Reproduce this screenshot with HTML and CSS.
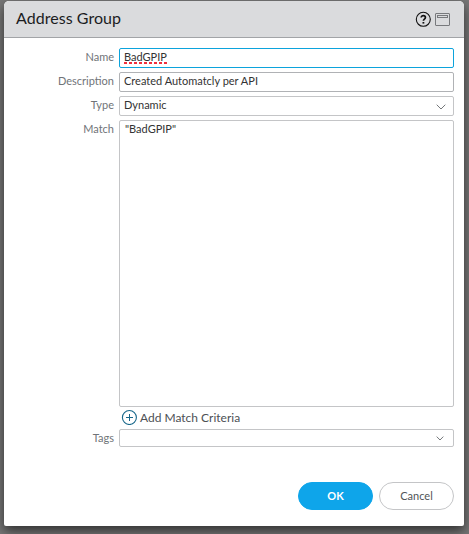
FILE: index.html
```
<!DOCTYPE html>
<html lang="en">
<head>
<meta charset="utf-8">
<title>Address Group</title>
<link rel="stylesheet" href="styles.css">
</head>
<body>
<section class="dialog">
  <header class="titlebar">
    <h1>Address Group</h1>
    <svg class="help" width="16" height="16" viewBox="0 0 16 16" fill="none" stroke="#111">
      <circle cx="8.3" cy="8.3" r="7" stroke-width="1.1"/>
      <path d="M6.2 6.5C6.2 3.9 10.4 4 10.4 6.5C10.4 8.1 8.4 8.1 8.4 9.8" stroke-width="1.7"/>
      <path d="M8.4 11V12.6" stroke-width="1.8"/>
    </svg>
    <svg class="window" width="15" height="13" viewBox="0 0 15 13" fill="none" stroke="#77797c">
      <rect x=".5" y=".5" width="14" height="12" rx=".5"/>
      <rect x="2.5" y="2.5" width="10" height="2"/>
    </svg>
  </header>
  <div class="form">
    <span class="label">Name</span>
    <div class="field focused"><span class="misspelled">BadGPIP</span></div>
    <span class="label">Description</span>
    <div class="field dark">Created Automatcly per API</div>
    <span class="label">Type</span>
    <div class="field select">Dynamic
      <svg width="10" height="6" viewBox="0 0 10 6" fill="none" stroke="#74777a"><path d="M.7.7L5 5L9.3.7"/></svg>
    </div>
    <span class="label">Match</span>
    <div class="field area">"BadGPIP"</div>
    <div class="add">
      <svg width="16" height="16" viewBox="0 0 16 16" fill="none" stroke="#17678a"><circle cx="8.4" cy="8.5" r="7" stroke-width="1.1"/><path d="M5 8.5H12M8.5 5V12"/></svg>
      <span>Add Match Criteria</span>
    </div>
    <span class="label">Tags</span>
    <div class="field tags">
      <svg width="8" height="5" viewBox="0 0 8 5" fill="none" stroke="#74777a"><path d="M.7.6L4 4L7.3.6"/></svg>
    </div>
  </div>
  <footer class="actions">
    <button class="ok">OK</button>
    <button class="cancel">Cancel</button>
  </footer>
</section>
</body>
</html>
```
FILE: styles.css
```
* { box-sizing: border-box; }
html, body { height: 100%; }
body {
  margin: 0;
  padding: 1px 5px 8px 4px;
  overflow: hidden;
  background: #777;
  font: 11px/16px Lato, "Liberation Sans", sans-serif;
  color: #333;
}
.dialog {
  height: 525px;
  display: flex;
  flex-direction: column;
  background: #fff;
  border-radius: 5px 5px 2px 2px;
  box-shadow: 0 5px 12px rgba(0, 0, 0, .6);
}
.titlebar {
  height: 37px;
  display: flex;
  align-items: center;
  padding: 0 14px 0 12px;
  background: #dadbdd;
  border-bottom: 1px solid #a2a4a7;
  border-radius: 5px 5px 0 0;
}
h1 {
  margin: 0 auto 0 0;
  padding-bottom: 2px;
  font-size: 16px;
  font-weight: 400;
  line-height: 20px;
  letter-spacing: .04px;
  color: #1c1d1f;
}
.help { margin-right: 4px; }
.form {
  display: grid;
  grid-template-columns: 110px 335px;
  column-gap: 5px;
  row-gap: 4px;
  grid-template-rows: 20px 20px 20px 287px 14px 18px;
  padding-top: 10px;
}
.label {
  padding-top: 1px;
  text-align: right;
  color: #707478;
}
.field {
  height: 100%;
  padding: 0 4px;
  border: 1px solid #c4c5c7;
  border-radius: 2px;
}
.dark { border-color: #b0b2b5; }
.focused { border-color: #0ca3dc; }
.misspelled {
  padding-bottom: 1px;
  background: repeating-linear-gradient(90deg, #f0303c 0 3px, #fff 3px 5px) 0 100% / 100% 2px no-repeat;
}
.select, .tags {
  display: flex;
  justify-content: space-between;
}
.select svg { margin-top: 7px; }
.select { padding-right: 7px; }
.tags { align-items: center; justify-content: flex-end; padding-right: 9px; }
.area { padding-left: 5px; }
.add {
  grid-column: 2;
  display: flex;
  align-items: center;
  gap: 3px;
  margin-top: -2px;
  padding-left: 2px;
  font-size: 12px;
  color: #4c5054;
}
.add span { padding-top: 2px; }
.actions {
  display: flex;
  justify-content: flex-end;
  gap: 6px;
  margin-top: 35px;
  padding-right: 10px;
}
button {
  width: 75px;
  height: 28px;
  padding: 0;
  border: 1px solid #c4c5c7;
  border-radius: 14px;
  background: #fff;
  font: 11px/18px Lato, "Liberation Sans", sans-serif;
  color: #505458;
}
.ok {
  border-color: #0ea5ea;
  background: #0ea5ea;
  color: #fff;
  font-weight: 700;
}
```
